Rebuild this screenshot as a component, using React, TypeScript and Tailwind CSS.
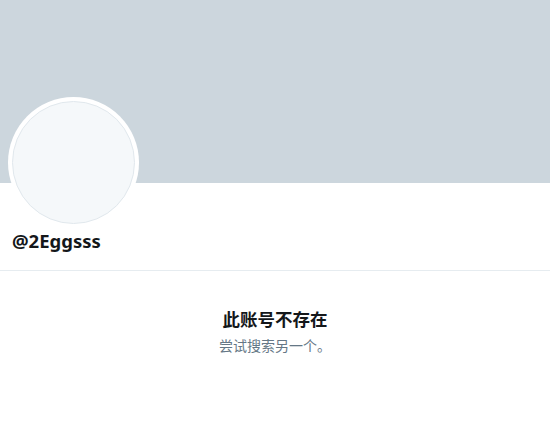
export default function App() {
  return (
    <div className="min-h-[425px] w-[550px] bg-white font-['Noto_Sans','Noto_Sans_CJK_SC',sans-serif]">
      {/* header image placeholder */}
      <div className="h-[183px] bg-[#ccd6dd]" />

      <div className="px-3">
        <div className="-ml-1 -mt-[86px] h-[131px] w-[131px] rounded-full bg-white p-1">
          <div className="h-full w-full rounded-full border border-[#e1e8ed] bg-[#f5f8fa]" />
        </div>
        <div className="mt-[1px] pb-[17px] text-[18.5px] font-bold leading-6 text-[#14171a]">@2Eggsss</div>
      </div>

      <div className="border-t border-[#e6ecf0]" />

      <div className="flex flex-col items-center pt-[36px]">
        <div className="text-[17.5px] font-bold leading-6 text-[#14171a]">此账号不存在</div>
        <div className="mt-[5px] text-[14px] leading-5 text-[#657786]">尝试搜索另一个。</div>
      </div>
    </div>
  );
}
